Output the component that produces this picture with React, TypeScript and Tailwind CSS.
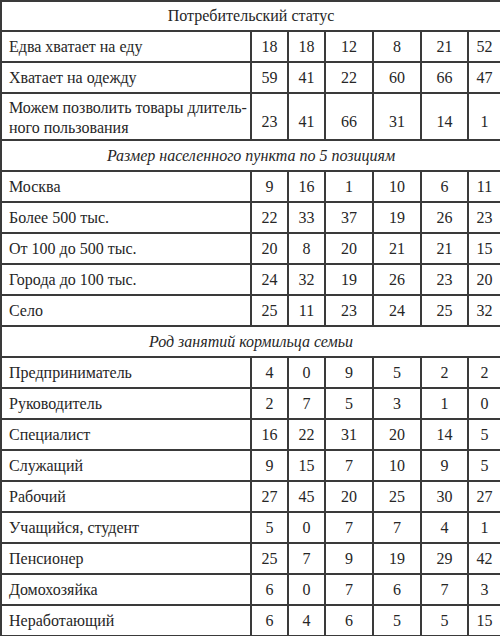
const sections: { title: string; italic: boolean; rows: [string, number[]][] }[] = [
  {
    title: "Потребительский статус",
    italic: false,
    rows: [
      ["Едва хватает на еду", [18, 18, 12, 8, 21, 52]],
      ["Хватает на одежду", [59, 41, 22, 60, 66, 47]],
      ["Можем позволить товары длитель-ного пользования", [23, 41, 66, 31, 14, 1]],
    ],
  },
  {
    title: "Размер населенного пункта по 5 позициям",
    italic: true,
    rows: [
      ["Москва", [9, 16, 1, 10, 6, 11]],
      ["Более 500 тыс.", [22, 33, 37, 19, 26, 23]],
      ["От 100 до 500 тыс.", [20, 8, 20, 21, 21, 15]],
      ["Города до 100 тыс.", [24, 32, 19, 26, 23, 20]],
      ["Село", [25, 11, 23, 24, 25, 32]],
    ],
  },
  {
    title: "Род занятий кормильца семьи",
    italic: true,
    rows: [
      ["Предприниматель", [4, 0, 9, 5, 2, 2]],
      ["Руководитель", [2, 7, 5, 3, 1, 0]],
      ["Специалист", [16, 22, 31, 20, 14, 5]],
      ["Служащий", [9, 15, 7, 10, 9, 5]],
      ["Рабочий", [27, 45, 20, 25, 30, 27]],
      ["Учащийся, студент", [5, 0, 7, 7, 4, 1]],
      ["Пенсионер", [25, 7, 9, 19, 29, 42]],
      ["Домохозяйка", [6, 0, 7, 6, 7, 3]],
      ["Неработающий", [6, 4, 6, 5, 5, 15]],
    ],
  },
];

const cell =
  "border-2 border-[#3a3a3a] p-0 font-['Liberation_Serif',serif] text-[16px] text-[#262626]";

const App = () => {
  return (
    <div className="w-[500px] h-[636px] bg-white overflow-hidden font-['Liberation_Serif',serif]">
      <table className="w-[500px] border-collapse table-fixed">
        <colgroup>
          <col className="w-[250px]" />
          <col className="w-[37px]" />
          <col className="w-[37px]" />
          <col className="w-[48px]" />
          <col className="w-[48px]" />
          <col className="w-[47px]" />
          <col className="w-[33px]" />
        </colgroup>
        <tbody>
          {sections.map((s, si) => (
            <>
              <tr key={"h" + si}>
                <td
                  colSpan={7}
                  className={
                    cell +
                    " text-center " +
                    (si === 0 ? "h-[30px]" : "h-[31px]") +
                    (s.italic ? " italic" : "")
                  }
                >
                  {s.title}
                </td>
              </tr>
              {s.rows.map(([label, nums], ri) => {
                const tall = label.length > 30;
                return (
                  <tr key={si + "-" + ri}>
                    <td
                      className={
                        cell +
                        " pl-[7px] leading-[20px] whitespace-nowrap " +
                        (tall ? "h-[47px] align-top pt-[4px]" : "h-[31px]")
                      }
                    >
                      {tall ? (
                        <>
                          Можем позволить товары длитель-
                          <br />
                          ного пользования
                        </>
                      ) : (
                        label
                      )}
                    </td>
                    {nums.map((n, ni) => (
                      <td
                        key={ni}
                        className={
                          cell + " text-center " + (tall ? "align-bottom pb-[5px]" : "")
                        }
                      >
                        {n}
                      </td>
                    ))}
                  </tr>
                );
              })}
            </>
          ))}
        </tbody>
      </table>
    </div>
  );
};

export default App;
